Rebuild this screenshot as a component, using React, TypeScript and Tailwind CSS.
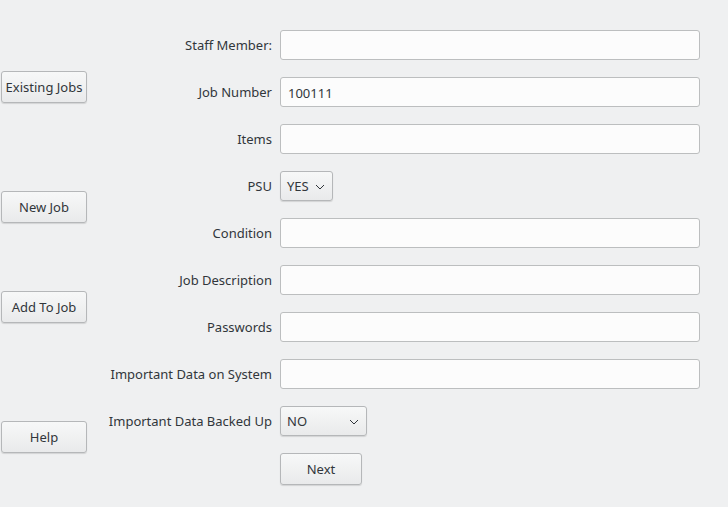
const labelCls = "pt-[2px] text-right text-[13px] text-[#31363b] whitespace-nowrap";
const inputCls =
  "h-[30px] w-[420px] rounded-[3px] border border-[#bcbebf] bg-[#fcfcfc] px-[7px] pt-[2px] text-[13px] text-[#31363b] outline-none";
const btnBase =
  "flex items-center rounded-[3px] border border-[#b5b7b9] bg-gradient-to-b from-[#f7f8f8] to-[#e9eaeb] pt-[2px] text-[13px] text-[#31363b] shadow-[0_1px_1px_rgba(0,0,0,0.12)]";
const btnCls = `${btnBase} justify-center`;

function Chevron() {
  return (
    <svg width="10" height="6" viewBox="0 0 10 6" className="shrink-0">
      <polyline points="1,1 5,5 9,1" fill="none" stroke="#31363b" strokeWidth="1" />
    </svg>
  );
}

function Combo({ value, width }: { value: string; width: string }) {
  return (
    <div className={`${btnBase} ${width} h-[30px] justify-between pl-[6px] pr-[7px]`}>
      <span>{value}</span>
      <Chevron />
    </div>
  );
}

function Row({ label, children }: { label: string; children: React.ReactNode }) {
  return (
    <>
      <div className={labelCls}>{label}</div>
      <div className="flex items-center">{children}</div>
    </>
  );
}

export default function App() {
  return (
    <div
      className="flex h-[507px] w-[728px] bg-[#eff0f1]"
      style={{ fontFamily: '"Noto Sans", "Open Sans", sans-serif' }}
    >
      <div className="flex w-[88px] flex-col pl-[1px]">
        <div className={`${btnCls} mt-[71px] h-[32px] w-[86px]`}>Existing Jobs</div>
        <div className={`${btnCls} mt-[88px] h-[32px] w-[86px]`}>New Job</div>
        <div className={`${btnCls} mt-[68px] h-[32px] w-[86px]`}>Add To Job</div>
        <div className={`${btnCls} mt-[98px] h-[32px] w-[86px]`}>Help</div>
      </div>
      <div className="grid grid-cols-[184px_420px] items-center gap-x-[8px] gap-y-[17px] pt-[30px] content-start">
        <Row label="Staff Member:">
          <input className={inputCls} />
        </Row>
        <Row label="Job Number">
          <input className={inputCls} defaultValue="100111" />
        </Row>
        <Row label="Items">
          <input className={inputCls} />
        </Row>
        <Row label="PSU">
          <Combo value="YES" width="w-[53px]" />
        </Row>
        <Row label="Condition">
          <input className={inputCls} />
        </Row>
        <Row label="Job Description">
          <input className={inputCls} />
        </Row>
        <Row label="Passwords">
          <input className={inputCls} />
        </Row>
        <Row label="Important Data on System">
          <input className={inputCls} />
        </Row>
        <Row label="Important Data Backed Up">
          <Combo value="NO" width="w-[87px]" />
        </Row>
        <div />
        <div className={`${btnCls} h-[32px] w-[82px]`}>Next</div>
      </div>
    </div>
  );
}
